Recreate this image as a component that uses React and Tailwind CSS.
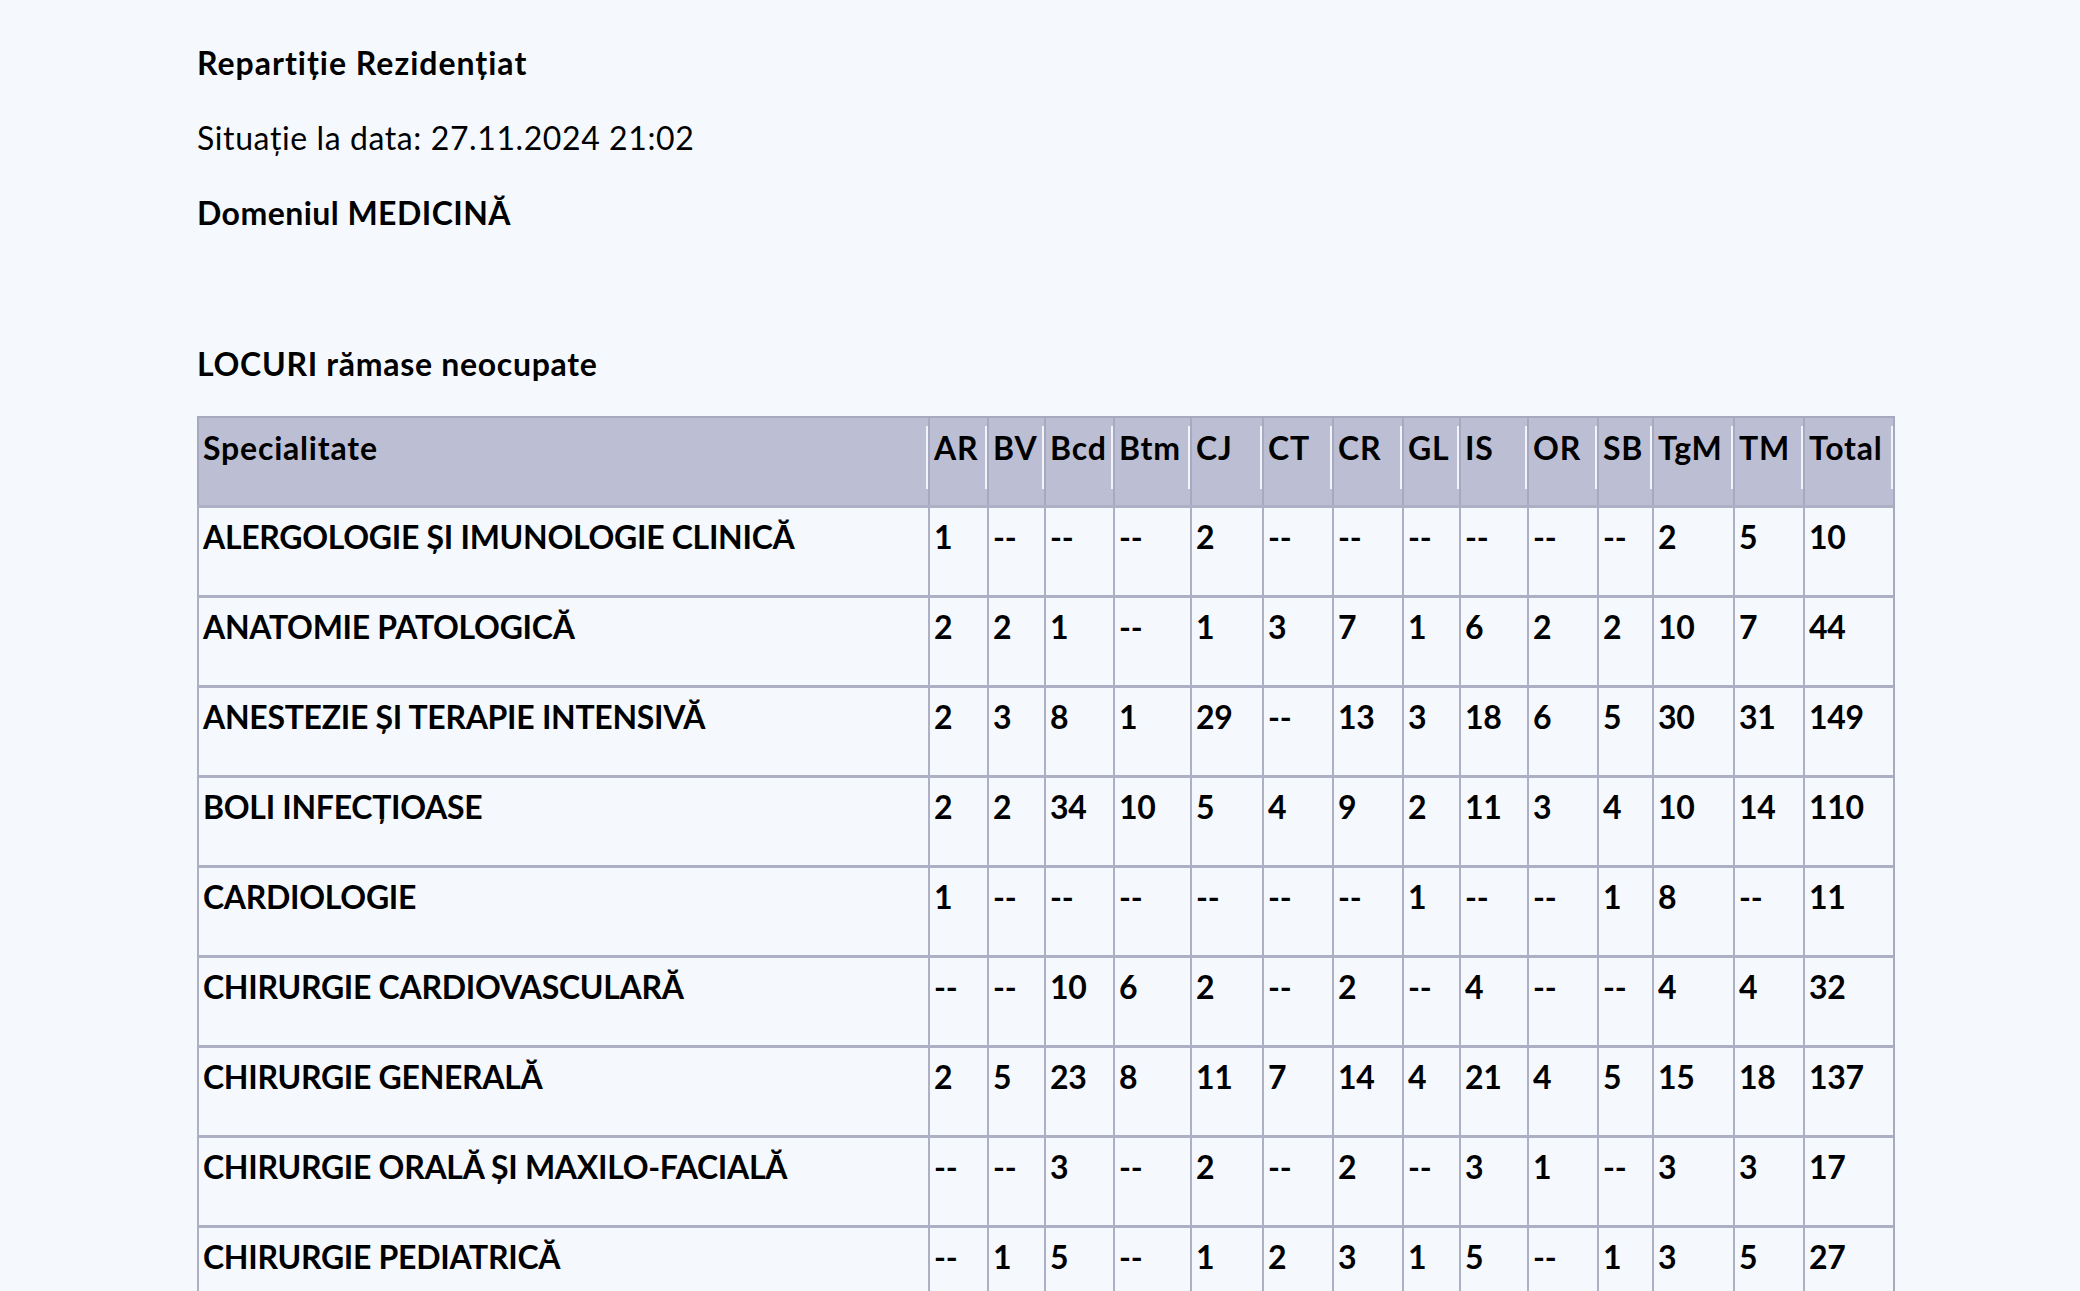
import React from 'react';

const cols = ['AR', 'BV', 'Bcd', 'Btm', 'CJ', 'CT', 'CR', 'GL', 'IS', 'OR', 'SB', 'TgM', 'TM', 'Total'];
const widths = [731, 59, 57, 69, 77, 72, 70, 70, 57, 68, 70, 55, 81, 70, 90];

const rows = [
  ['ALERGOLOGIE ȘI IMUNOLOGIE CLINICĂ', '1', '--', '--', '--', '2', '--', '--', '--', '--', '--', '--', '2', '5', '10'],
  ['ANATOMIE PATOLOGICĂ', '2', '2', '1', '--', '1', '3', '7', '1', '6', '2', '2', '10', '7', '44'],
  ['ANESTEZIE ȘI TERAPIE INTENSIVĂ', '2', '3', '8', '1', '29', '--', '13', '3', '18', '6', '5', '30', '31', '149'],
  ['BOLI INFECȚIOASE', '2', '2', '34', '10', '5', '4', '9', '2', '11', '3', '4', '10', '14', '110'],
  ['CARDIOLOGIE', '1', '--', '--', '--', '--', '--', '--', '1', '--', '--', '1', '8', '--', '11'],
  ['CHIRURGIE CARDIOVASCULARĂ', '--', '--', '10', '6', '2', '--', '2', '--', '4', '--', '--', '4', '4', '32'],
  ['CHIRURGIE GENERALĂ', '2', '5', '23', '8', '11', '7', '14', '4', '21', '4', '5', '15', '18', '137'],
  ['CHIRURGIE ORALĂ ȘI MAXILO-FACIALĂ', '--', '--', '3', '--', '2', '--', '2', '--', '3', '1', '--', '3', '3', '17'],
  ['CHIRURGIE PEDIATRICĂ', '--', '1', '5', '--', '1', '2', '3', '1', '5', '--', '1', '3', '5', '27'],
];

const HeadCell = ({ children }) => (
  <th className="relative h-[89px] border-l-2 border-t-2 border-[#a7a9c0] bg-[#bcbfd3] px-[4px] pt-[11px] text-left align-top font-bold tracking-[0.8px] whitespace-nowrap">
    {children}
    <span className="absolute right-0 top-[8px] bottom-[16px] w-[2px] bg-[#f2f4fa]" />
  </th>
);

export default function App() {
  return (
    <div
      className="min-h-screen bg-[#f5f9fe] pl-[197px] pt-[44px] text-[32px] leading-[37px] text-black"
      style={{ fontFamily: 'Lato, "Open Sans", sans-serif' }}
    >
      <p className="mb-[38px] font-bold tracking-[1px]">Repartiție Rezidențiat</p>
      <p className="mb-[38px] tracking-[0.6px]">Situație la data: 27.11.2024 21:02</p>
      <p className="mb-[114px] font-bold tracking-[0.45px]">Domeniul MEDICINĂ</p>
      <p className="mb-[34px] font-bold tracking-[0.7px]">LOCURI rămase neocupate</p>

      <table className="table-fixed border-separate border-spacing-0 border-r-2 border-b-2 border-[#a7a9c0] w-[1696px]">
        <colgroup>
          {widths.map((w, i) => (
            <col key={i} style={{ width: w }} />
          ))}
        </colgroup>
        <thead>
          <tr>
            <HeadCell>Specialitate</HeadCell>
            {cols.map((c) => (
              <HeadCell key={c}>{c}</HeadCell>
            ))}
          </tr>
        </thead>
        <tbody>
          {rows.map((r) => (
            <tr key={r[0]}>
              {r.map((v, i) => (
                <td
                  key={i}
                  className="h-[90px] border-l-2 border-t-[3px] border-[#adafc5] px-[4px] pt-[10px] align-top font-bold tracking-[-0.3px] whitespace-nowrap"
                >
                  {v}
                </td>
              ))}
            </tr>
          ))}
        </tbody>
      </table>
    </div>
  );
}
